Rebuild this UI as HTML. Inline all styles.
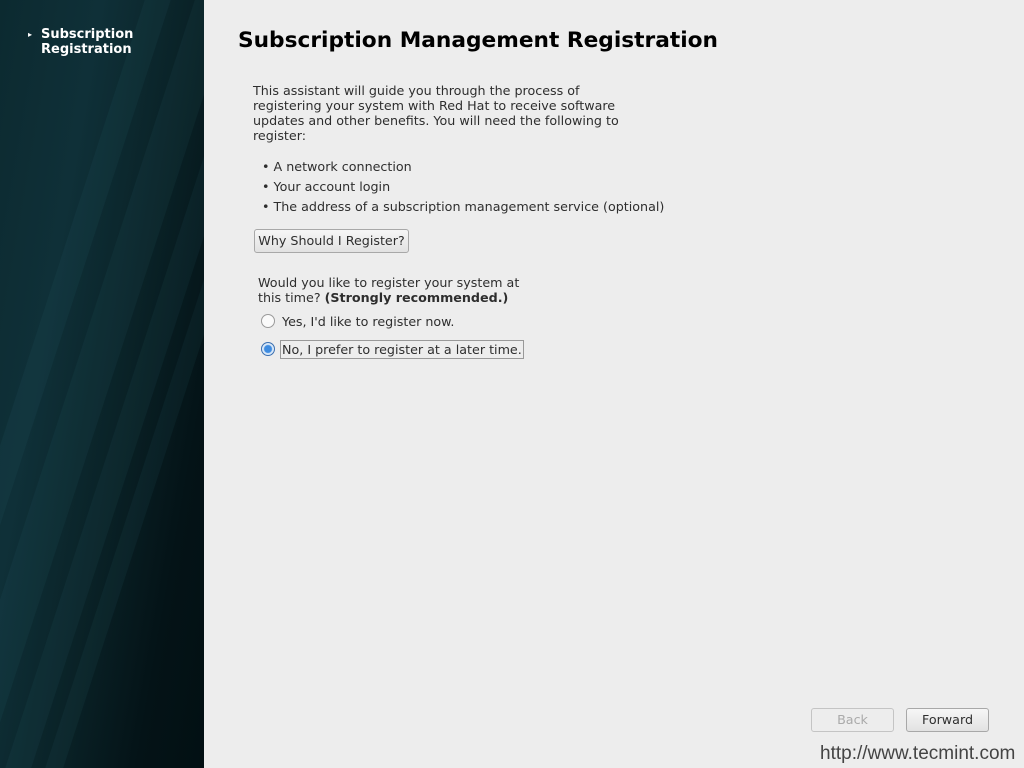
<!DOCTYPE html>
<html style="overflow:hidden;width:1024px;height:768px"><head><style>
body{margin:0;width:1024px;height:768px;background:#ededed;font-family:"DejaVu Sans",sans-serif;font-size:12.7px;color:#2e2e2e;position:relative;overflow:hidden}
#side{position:absolute;left:0;top:0;width:204px;height:768px;overflow:hidden;background:linear-gradient(100deg,#0c2a30 0%,#0f3038 30%,#0a2328 55%,#041317 80%,#021013 100%)}
#side .str{position:absolute;top:0;height:768px;width:26px;background:rgba(60,120,130,0.09);transform:skewX(-18deg)}
.a{position:absolute;white-space:nowrap}
h1{position:absolute;left:238px;top:28px;margin:0;font-family:"DejaVu Sans",sans-serif;font-weight:bold;font-size:21.7px;color:#000;white-space:nowrap}
.btn{position:absolute;border:1px solid #a8a8a8;border-radius:3px;background:linear-gradient(#f6f6f6,#e2e2e2);text-align:center;line-height:22px;height:22px}
.radio{position:absolute;width:12px;height:12px;border-radius:50%;border:1px solid #9a9a9a;background:#fafafa}
</style></head><body>
<div id="side">
<div class="str" style="left:20px"></div><div class="str" style="left:70px;width:40px"></div><div class="str" style="left:130px"></div><div class="str" style="left:170px;width:18px"></div>
<div class="a" style="left:28px;top:30px;color:#fff;font-size:8px">▸</div>
<div class="a" style="left:41px;top:27px;color:#fff;font-weight:bold;font-size:13px;line-height:15px">Subscription<br>Registration</div>
</div>
<h1>Subscription Management Registration</h1>
<div class="a" style="left:253px;top:83px;line-height:15px">This assistant will guide you through the process of<br>registering your system with Red Hat to receive software<br>updates and other benefits. You will need the following to<br>register:</div>
<div class="a" style="left:262px;top:157px;line-height:20px">• A network connection<br>• Your account login<br>• The address of a subscription management service (optional)</div>
<div class="btn" style="left:254px;top:229px;width:153px">Why Should I Register?</div>
<div class="a" style="left:258px;top:275px;line-height:15px">Would you like to register your system at<br>this time? <b>(Strongly recommended.)</b></div>
<div class="radio" style="left:261px;top:314px"></div>
<div class="a" style="left:282px;top:314px">Yes, I'd like to register now.</div>
<div class="radio" style="left:261px;top:342px;border-color:#3a6fb0;background:radial-gradient(circle,#3d8be0 0,#3d8be0 3.5px,#d9e8f8 4.5px)"></div>
<div class="a" style="left:280px;top:340px;border:1px solid #999;padding:1px 1px;line-height:15px">No, I prefer to register at a later time.</div>
<div class="btn" style="left:811px;top:708px;width:81px;color:#aaa;background:#ededed;border-color:#c4c4c4">Back</div>
<div class="btn" style="left:906px;top:708px;width:81px">Forward</div>
<div class="a" style="left:820px;bottom:4px;line-height:20px;font-family:'Liberation Sans',sans-serif;font-size:19px;color:#444">http://www.tecmint.com</div>
</body></html>
